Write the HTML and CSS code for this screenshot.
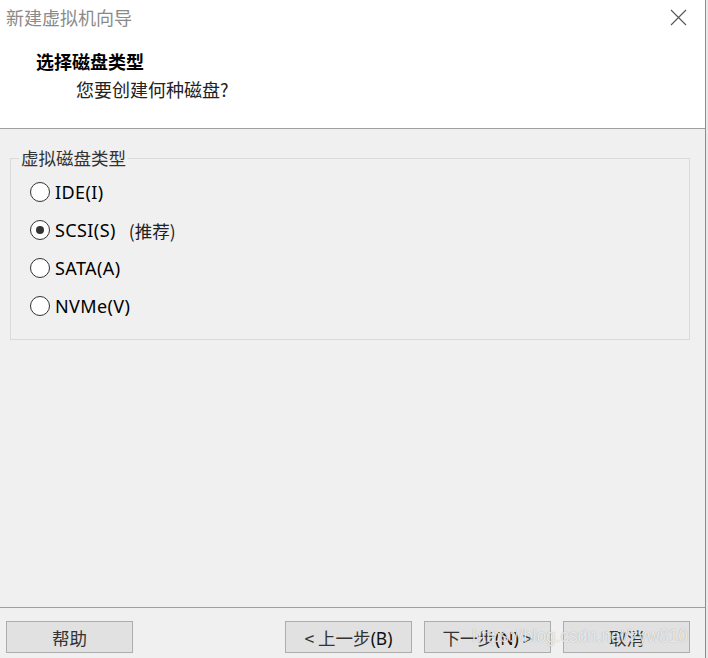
FILE: index.html
```html
<!DOCTYPE html>
<html lang="zh-CN">
<head>
  <meta charset="UTF-8">
  <title>新建虚拟机向导</title>
  <link rel="stylesheet" href="styles.css">
</head>
<body>
  <div class="window">
    <div class="header">
      <div class="titlebar">
        <span class="title">新建虚拟机向导</span>
        <svg class="close" width="17" height="17" viewBox="0 0 17 17">
          <path d="M1 1 L16 16 M16 1 L1 16" stroke="#555" stroke-width="1.1" fill="none"/>
        </svg>
      </div>
      <div class="heading">选择磁盘类型</div>
      <div class="subheading">您要创建何种磁盘?</div>
    </div>

    <div class="main">
      <fieldset class="group">
        <legend>虚拟磁盘类型</legend>
        <div class="options">
          <label class="option"><span class="radio"></span><span class="opt-text">IDE(I)</span></label>
          <label class="option"><span class="radio checked"></span><span class="opt-text">SCSI(S)</span><span class="hint">(推荐)</span></label>
          <label class="option"><span class="radio"></span><span class="opt-text">SATA(A)</span></label>
          <label class="option"><span class="radio"></span><span class="opt-text">NVMe(V)</span></label>
        </div>
      </fieldset>
    </div>

    <div class="footer">
      <button class="btn help">帮助</button>
      <div class="nav">
        <button class="btn">&lt; 上一步<span class="key">(B)</span></button>
        <button class="btn">下一步<span class="key">(N)</span> &gt;</button>
        <button class="btn">取消</button>
      </div>
      <span class="watermark">https://blog.csdn.net/zyw810</span>
    </div>
  </div>
</body>
</html>
```

FILE: styles.css
```css
body {
  margin: 0;
  background: #e9e9e9;
  font-family: "Noto Sans CJK SC", "Noto Sans", sans-serif;
}
.window {
  width: 705px;
  height: 658px;
  border-right: 1px solid #8c8c8c;
  background: #f0f0f0;
  display: flex;
  flex-direction: column;
  overflow: hidden;
}
.header {
  height: 129px;
  box-sizing: border-box;
  background: #fff;
  border-bottom: 1px solid #a0a0a0;
}
.titlebar {
  display: flex;
  justify-content: space-between;
  align-items: center;
  height: 34px;
  padding: 0 18px 0 6px;
}
.title {
  font-size: 18px;
  color: #8a8a8a;
}
.close {
  display: block;
}
.heading {
  margin: 17px 0 0 36px;
  font-size: 18px;
  font-weight: bold;
  color: #000;
  line-height: 20px;
}
.subheading {
  margin: 8px 0 0 76px;
  font-size: 18px;
  color: #222;
  line-height: 20px;
}
.main {
  flex: 1;
  padding: 20px 15px 0 10px;
}
.group {
  margin: 0;
  padding: 0;
  border: 1px solid #dadada;
}
.group legend {
  margin-left: 8px;
  padding: 0 2px;
  font-size: 17.5px;
  line-height: 18px;
  color: #333;
}
.options {
  padding: 6px 0 14px 19px;
}
.option {
  display: flex;
  align-items: center;
  height: 38px;
}
.radio {
  width: 18px;
  height: 18px;
  border: 1px solid #333;
  border-radius: 50%;
  background: #fff;
  position: relative;
  flex: none;
}
.radio.checked::after {
  content: "";
  position: absolute;
  left: 5px;
  top: 5px;
  width: 8px;
  height: 8px;
  border-radius: 50%;
  background: #333;
}
.opt-text {
  margin-left: 5px;
  font-family: "Noto Sans", sans-serif;
  font-size: 18px;
  letter-spacing: 0.4px;
  color: #000;
}
.hint {
  margin-left: 13px;
  font-size: 17.5px;
  color: #222;
}
.footer {
  height: 51px;
  box-sizing: border-box;
  border-top: 1px solid #a0a0a0;
  display: flex;
  justify-content: space-between;
  padding: 13px 15px 0 6px;
  position: relative;
}
.nav {
  display: flex;
  gap: 12px;
}
.btn {
  width: 127px;
  height: 32px;
  padding: 0;
  background: #e1e1e1;
  border: 1px solid #adadad;
  font-family: "Noto Sans CJK SC", "Noto Sans", sans-serif;
  font-size: 17.5px;
  color: #333;
}
.key {
  font-family: "Noto Sans", sans-serif;
  color: #111;
}
.watermark {
  position: absolute;
  left: 472px;
  top: 17px;
  white-space: nowrap;
  font-family: "Liberation Sans", sans-serif;
  font-size: 19px;
  color: rgba(255, 255, 255, 0.8);
  text-shadow: 0 0 1px rgba(0, 0, 0, 0.35);
  transform: scaleX(0.9);
  transform-origin: left center;
  pointer-events: none;
}
```
